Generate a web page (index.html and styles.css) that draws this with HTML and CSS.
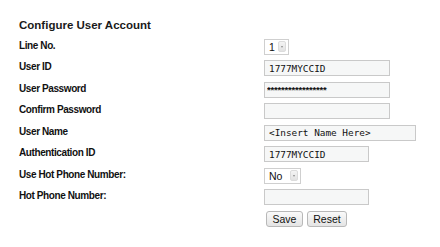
FILE: index.html
```html
<!DOCTYPE html>
<html>
<head>
<meta charset="utf-8">
<link rel="stylesheet" href="styles.css">
</head>
<body>
<div class="page">
  <h1 class="title">Configure User Account</h1>
  <div class="form">
    <div class="label">Line No.</div>
    <div class="field"><div class="select s-line"><span class="val">1</span><span class="arrow"></span></div></div>

    <div class="label">User ID</div>
    <div class="field"><input class="input w-mid" type="text" value="1777MYCCID"></div>

    <div class="label">User Password</div>
    <div class="field"><input class="input w-mid pw" type="text" value="*****************"></div>

    <div class="label">Confirm Password</div>
    <div class="field"><input class="input w-mid" type="text" value=""></div>

    <div class="label">User Name</div>
    <div class="field"><input class="input w-long" type="text" value="&lt;Insert Name Here&gt;"></div>

    <div class="label">Authentication ID</div>
    <div class="field"><input class="input w-short" type="text" value="1777MYCCID"></div>

    <div class="label">Use Hot Phone Number:</div>
    <div class="field"><div class="select s-no"><span class="val">No</span><span class="arrow"></span></div></div>

    <div class="label">Hot Phone Number:</div>
    <div class="field"><input class="input w-short" type="text" value=""></div>

    <div class="label"></div>
    <div class="field buttons"><button class="btn btn-save">Save</button><button class="btn btn-reset">Reset</button></div>
  </div>
</div>
</body>
</html>
```

FILE: styles.css
```css
html, body {
  margin: 0;
  padding: 0;
  background: #ffffff;
}
.page {
  padding: 18px 0 0 19px;
  font-family: "Liberation Sans", Arial, sans-serif;
  color: #111;
}
.title {
  margin: 0;
  font-size: 11.5px;
  line-height: 14px;
  font-weight: bold;
  color: #1a1a1a;
}
.form {
  margin-top: 4px;
  display: grid;
  grid-template-columns: 245px auto;
  grid-auto-rows: 21.5px;
  align-items: center;
}
.label {
  font-size: 10px;
  font-weight: bold;
  letter-spacing: -0.4px;
  color: #111;
  line-height: 12px;
  margin-top: -2px;
}
.field {
  display: flex;
  align-items: center;
}
.input {
  box-sizing: border-box;
  height: 16px;
  margin: 0;
  padding: 0 4px;
  border: 1px solid #c9c9c9;
  background: #f6f7f7;
  font-family: "DejaVu Sans Mono", monospace;
  font-size: 9.4px;
  color: #111;
  outline: none;
}
.w-mid { width: 126px; }
.w-long { width: 152px; }
.w-short { width: 105px; }
.pw {
  font-family: "Liberation Sans", Arial, sans-serif;
  font-size: 9.5px;
  font-weight: bold;
  padding-left: 2px;
  letter-spacing: -0.2px;
}
.select {
  box-sizing: border-box;
  height: 16px;
  border: 1px solid #cfcfcf;
  background: #ffffff;
  display: flex;
  align-items: center;
  justify-content: space-between;
  padding: 0 2px 0 4px;
  font-family: "Liberation Sans", Arial, sans-serif;
  font-size: 10.5px;
  color: #111;
}
.s-line { width: 25px; }
.s-no { width: 37px; }
.arrow {
  width: 8px;
  height: 11px;
  box-sizing: border-box;
  border: 1px solid #dcdcdc;
  border-radius: 2px;
  background: linear-gradient(#f4f4f4, #e2e2e2);
  position: relative;
}
.arrow::after {
  content: "";
  position: absolute;
  left: 2px;
  top: 4px;
  border-left: 1.5px solid transparent;
  border-right: 1.5px solid transparent;
  border-top: 2px solid #8a8a8a;
}
.buttons {
  gap: 4px;
  padding-left: 2px;
}
.btn {
  box-sizing: border-box;
  height: 16px;
  margin: 0;
  padding: 0;
  border: 1px solid #b8b8b8;
  border-radius: 3px;
  background: linear-gradient(#fafafa, #e4e4e4);
  font-family: "Liberation Sans", Arial, sans-serif;
  font-size: 10.5px;
  color: #111;
  line-height: 14px;
}
.btn-save { width: 37px; }
.btn-reset { width: 40px; }
```
